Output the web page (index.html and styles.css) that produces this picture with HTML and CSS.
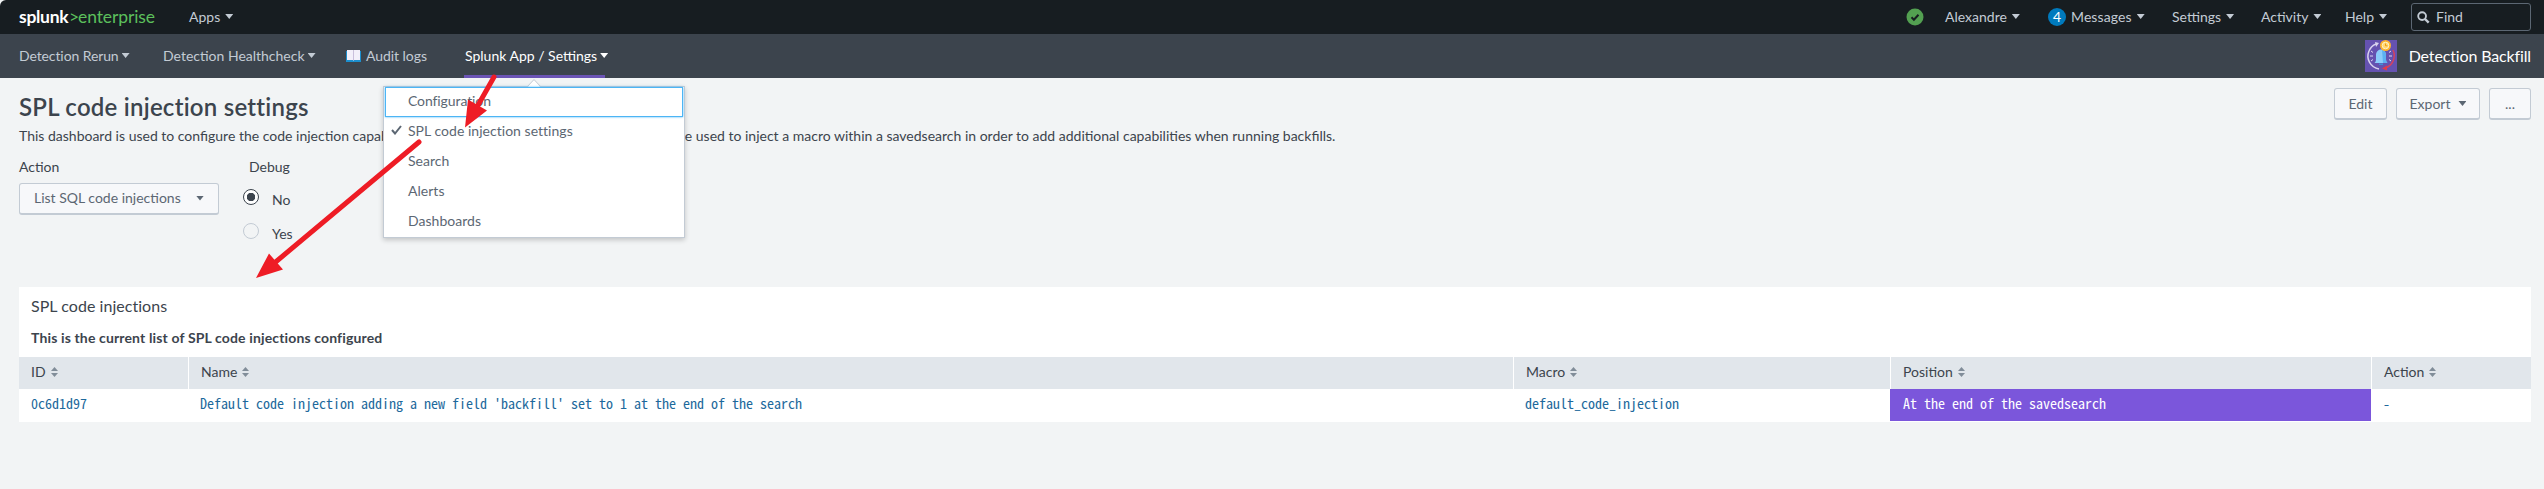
FILE: index.html
```html
<!DOCTYPE html>
<html lang="en">
<head>
<meta charset="utf-8">
<title>SPL code injection settings</title>
<link rel="stylesheet" href="styles.css">
</head>
<body>
<header class="topbar">
  <div class="logo"><span class="logo-name">splunk</span><span class="logo-gt">&gt;</span><span class="logo-ent">enterprise</span></div>
  <div class="top-item apps"><span>Apps</span><i class="caret"></i></div>
  <div class="top-right">
    <svg class="status" viewBox="0 0 18 18"><circle cx="9" cy="9" r="8.5" fill="#53a051"/><path d="M5.5 9.3l2.4 2.4 4.6-5" fill="none" stroke="#171d21" stroke-width="2"/></svg>
    <div class="top-item user"><span>Alexandre</span><i class="caret"></i></div>
    <div class="top-item messages"><b class="count">4</b><span>Messages</span><i class="caret"></i></div>
    <div class="top-item settings"><span>Settings</span><i class="caret"></i></div>
    <div class="top-item activity"><span>Activity</span><i class="caret"></i></div>
    <div class="top-item help"><span>Help</span><i class="caret"></i></div>
    <div class="find"><svg viewBox="0 0 14 14"><circle cx="5.5" cy="5.5" r="4.2" fill="none" stroke="#c3cbd4" stroke-width="2"/><path d="M8.6 8.6l4 4" stroke="#c3cbd4" stroke-width="2.6"/></svg><span>Find</span></div>
  </div>
</header>
<nav class="nav">
  <div class="nav-item rerun"><span>Detection Rerun</span><i class="caret"></i></div>
  <div class="nav-item health"><span>Detection Healthcheck</span><i class="caret"></i></div>
  <div class="nav-item audit"><svg class="book" viewBox="0 0 15 12"><path d="M0 1h15v11H0z" fill="#1c8fce"/><path d="M1 0h6l.5.6.5-.6h6v10H8l-.5.5-.5-.5H1z" fill="#f2effa"/><path d="M7.5.5v10" stroke="#c9bfdc"/></svg><span>Audit logs</span></div>
  <div class="nav-item active"><span>Splunk App / Settings</span><i class="caret"></i></div>
  <div class="app">
    <svg class="app-icon" viewBox="0 0 32 32"><path d="M0 0h32v32H0z" fill="#6552b0"/><path d="M14 29A13 13 0 0 1 4 11Q6 6 11 4" fill="none" stroke="#d8d3ee" stroke-width="1.500"/><path d="M10 2l4 1-3 4z" fill="#d8d3ee"/><path d="M28 10a13 13 0 0 1-8 18" fill="none" stroke="#d4415f" stroke-width="1.500"/><path d="M22 25.500l-5 3 5 2z" fill="#e03b4c"/><path d="M5 16h3M6 11l2 1.500M6 21l2-1.500M24 16h3M24 12.500l2-1.500M24 19.500l2 1.500" stroke="#ddd7f1"/><path d="M9.500 23c1-1 1.500-2 1.500-4v-4c0-3 2-5.500 5-5.500s5 2.500 5 5.500v4c0 2 .5 3 1.500 4z" fill="#8bccfb"/><path d="M17 9.700c2.500.5 4 2.600 4 5.300v4c0 2 .5 3 1.500 4H18z" fill="#5cb1f2"/><path d="M14 23.500h4v1.500h-4z" fill="#3e8fd6"/><circle cx="20.500" cy="5.500" r="5.500" fill="#ffb52e"/><circle cx="20.500" cy="5.500" r="3.300" fill="#ffd978" stroke="#fff1c4"/><path d="M20.500 3.500v2.300h2" fill="none" stroke="#f09a10"/></svg>
    <span>Detection Backfill</span>
  </div>
</nav>
<main class="page">
  <section class="heading">
    <div class="heading-text">
      <h1><span>SPL code injection settings</span></h1>
      <p class="desc"><span class="desc-a">This dashboard is used to configure the code injection capabilities.</span><span class="desc-b">be used to inject a macro within a savedsearch in order to add additional capabilities when running backfills.</span></p>
    </div>
    <div class="buttons">
      <button class="btn edit">Edit</button>
      <button class="btn export"><span>Export</span><i class="caret"></i></button>
      <button class="btn more">...</button>
    </div>
  </section>
  <section class="inputs">
    <div class="field"><label>Action</label><div class="select"><span>List SQL code injections</span><i class="caret"></i></div></div>
    <div class="field debug"><label>Debug</label>
      <div class="radio on"><i></i><span>No</span></div>
      <div class="radio"><i></i><span>Yes</span></div>
    </div>
  </section>
  <section class="panel">
    <h2><span>SPL code injections</span></h2>
    <h3><span>This is the current list of SPL code injections configured</span></h3>
    <div class="table">
      <div class="th">ID<svg class="sort" viewBox="0 0 7 10"><path d="M0 4l3.500-4L7 4zM0 6h7l-3.500 4z"/></svg></div>
      <div class="th">Name<svg class="sort" viewBox="0 0 7 10"><path d="M0 4l3.500-4L7 4zM0 6h7l-3.500 4z"/></svg></div>
      <div class="th">Macro<svg class="sort" viewBox="0 0 7 10"><path d="M0 4l3.500-4L7 4zM0 6h7l-3.500 4z"/></svg></div>
      <div class="th">Position<svg class="sort" viewBox="0 0 7 10"><path d="M0 4l3.500-4L7 4zM0 6h7l-3.500 4z"/></svg></div>
      <div class="th">Action<svg class="sort" viewBox="0 0 7 10"><path d="M0 4l3.500-4L7 4zM0 6h7l-3.500 4z"/></svg></div>
      <div class="td">0c6d1d97</div>
      <div class="td">Default code injection adding a new field 'backfill' set to 1 at the end of the search</div>
      <div class="td">default_code_injection</div>
      <div class="td end">At the end of the savedsearch</div>
      <div class="td">-</div>
    </div>
  </section>
</main>
<div class="menu">
  <svg class="menu-tip" viewBox="0 0 16 9"><path d="M1 9l7-8 7 8z" fill="#fff"/><path d="M.5 8.500l7.500-8 7.500 8" fill="none" stroke="#c3cbd4"/></svg>
  <div class="menu-item focus"><span>Configuration</span></div>
  <div class="menu-item current"><svg class="check" viewBox="0 0 11 10"><path d="M1 5l3 3.500L10 1" fill="none" stroke="#5c6773" stroke-width="2"/></svg><span>SPL code injection settings</span></div>
  <div class="menu-item"><span>Search</span></div>
  <div class="menu-item"><span>Alerts</span></div>
  <div class="menu-item"><span>Dashboards</span></div>
</div>
<svg class="arrows" viewBox="0 0 700 300">
  <g fill="#ee1c25" stroke="#ee1c25"><path d="M494 77L477 107M419 142L272 265" stroke-width="5" stroke-linecap="round"/><path d="M465 127.500L468 99.500 487 110.500zM256 278L269 253.500 283 269.500z" stroke="none"/></g>
</svg>
</body>
</html>
```
FILE: styles.css
```css
* { box-sizing: border-box; }
html { background: #3c444d; overflow: hidden; }
body { margin: 0; height: 489px; overflow: hidden; position: relative; background: #f2f4f5; color: #3c444d; font: 14px/20px Lato, "Open Sans", sans-serif; }
h1, h2, h3, p { margin: 0; }
span { white-space: nowrap; }
.caret { display: inline-block; flex: none; width: 8px; height: 5px; background: currentColor; clip-path: polygon(0 0, 100% 0, 50% 100%); }
.topbar { height: 34px; background: #171d21; color: #c3cbd4; display: flex; align-items: center; padding: 0 13px 1px 19px; border-top-left-radius: 6px; }
.logo { width: 170px; font-size: 17.500px; display: flex; }
.logo-name { color: #fff; font-weight: 700; width: 50px; letter-spacing: -.3px; }
.logo-gt { color: #5cc05c; width: 9px; }
.logo-ent { color: #5cc05c; letter-spacing: -.1px; }
.top-item { display: flex; align-items: center; flex: none; gap: 5px; }
.top-right { margin-left: auto; display: flex; align-items: center; }
.status { width: 18px; height: 18px; margin-right: 21px; }
.user { width: 103px; }
.messages { width: 124px; }
.messages span { letter-spacing: .1px; }
.settings { width: 89px; }
.activity { width: 84px; }
.help { width: 66px; }
.count { width: 18px; height: 18px; border-radius: 9px; background: #007abd; color: #fff; text-align: center; line-height: 18px; font-weight: 400; }
.find { width: 120px; height: 28px; margin-top: 1px; border: 1px solid #5c6773; border-radius: 3px; padding-left: 5px; display: flex; align-items: center; gap: 6px; }
.find svg { width: 13px; height: 13px; }
.nav { height: 44px; background: #3c444d; color: #c3cbd4; display: flex; align-items: center; padding: 0 13px 0 19px; }
.nav-item { display: flex; align-items: center; gap: 3px; height: 44px; padding-bottom: 1px; }
.rerun { width: 144px; letter-spacing: -.1px; }
.health { width: 183px; }
.audit { width: 118px; gap: 5px; letter-spacing: -.05px; }
.book { width: 15px; height: 12px; }
.active { width: 141px; color: #fff; border-bottom: 3px solid #6b54b5; padding: 2px 0 0 1px; }
.app { margin-left: auto; display: flex; align-items: center; gap: 12px; color: #fff; font-size: 16px; letter-spacing: -.14px; }
.app-icon { width: 32px; height: 32px; }
.page { padding: 10px 13px 0 19px; }
.heading { height: 71px; display: flex; justify-content: space-between; }
h1 { font-size: 24px; line-height: 38px; font-weight: 600; letter-spacing: .24px; }
.desc { display: flex; line-height: 20px; }
.desc-a { width: 658px; }
.buttons { display: flex; gap: 9px; }
.btn { height: 32px; border: 1px solid #c3cbd4; border-bottom-width: 2px; border-radius: 3px; background: #f7f8fa; color: #5c6773; font: inherit; padding: 0; display: flex; align-items: center; justify-content: center; }
.edit { width: 53px; }
.export { width: 84px; gap: 8px; }
.more { width: 42px; }
.inputs { display: flex; height: 128px; }
.field { width: 224px; }
.field label { display: block; height: 24px; line-height: 16px; }
.select { width: 200px; height: 32px; border: 1px solid #c3cbd4; border-bottom-width: 2px; border-radius: 3px; background: #f7f8fa; color: #5c6773; display: flex; align-items: center; justify-content: space-between; padding: 0 14px 1px; }
.debug label { padding-left: 6px; }
.radio { display: flex; height: 34px; gap: 13px; line-height: 34px; }
.radio i { width: 16px; height: 16px; border: 1px solid #c3cbd4; border-radius: 8px; margin-top: 6px; }
.radio.on i { border-color: #3c444d; background: radial-gradient(#3c444d 0 4px, #fff 4.500px); }
.panel { background: #fff; height: 135px; }
h2 { font-size: 16px; line-height: 22px; font-weight: 400; padding: 8px 12px 10px; letter-spacing: .04px; }
h3 { font-size: 14px; line-height: 20px; font-weight: 700; padding: 1px 12px 9px; letter-spacing: .14px; }
.table { display: grid; grid-template-columns: 169px 1325px 377px 481px 160px; grid-template-rows: 32px 32px; }
.th { background: #e1e6eb; padding: 5px 12px 7px; border-left: 1px solid #fff; }
.th:first-child { border-left: 0; }
.sort { width: 7px; height: 10px; margin-left: 5px; fill: #818d99; }
.td { padding: 4px 12px 8px; color: #1d699c; font: 14px/20px "Noto Sans Mono CJK SC", "DejaVu Sans Mono", monospace; }
.td.end { background: #7b56db; color: #fff; padding-left: 13px; }
.menu { position: absolute; left: 383px; top: 86px; width: 302px; height: 152px; background: #fff; border: 1px solid #c3cbd4; box-shadow: 0 2px 5px rgba(0,0,0,.2); color: #5c6773; }
.menu-tip { position: absolute; left: 142px; top: -8px; width: 16px; height: 9px; }
.menu-item { height: 30px; line-height: 28px; padding-left: 24px; position: relative; letter-spacing: .03px; }
.focus { border: 1px solid #4cb5f5; margin: 0 1px; padding-left: 22px; line-height: 26px; letter-spacing: -.1px; box-shadow: 0 0 2px #4cb5f5; }
.check { position: absolute; left: 7px; top: 8px; width: 11px; height: 10px; }
.arrows { position: absolute; left: 0; top: 0; width: 700px; height: 300px; }
```
